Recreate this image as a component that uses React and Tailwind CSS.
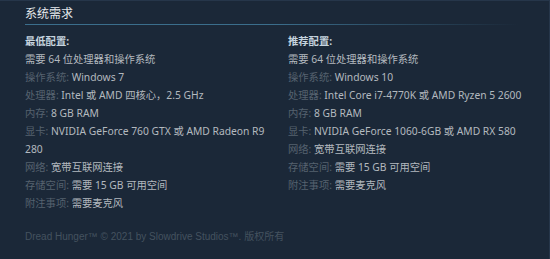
import React from "react";

const minimum = [
  { label: "操作系统:", value: "Windows 7" },
  { label: "处理器:", value: "Intel 或 AMD 四核心，2.5 GHz" },
  { label: "内存:", value: "8 GB RAM" },
  { label: "显卡:", value: "NVIDIA GeForce 760 GTX 或 AMD Radeon R9 280" },
  { label: "网络:", value: "宽带互联网连接" },
  { label: "存储空间:", value: "需要 15 GB 可用空间" },
  { label: "附注事项:", value: "需要麦克风" },
];

const recommended = [
  { label: "操作系统:", value: "Windows 10" },
  { label: "处理器:", value: "Intel Core i7-4770K 或 AMD Ryzen 5 2600" },
  { label: "内存:", value: "8 GB RAM" },
  { label: "显卡:", value: "NVIDIA GeForce 1060-6GB 或 AMD RX 580" },
  { label: "网络:", value: "宽带互联网连接" },
  { label: "存储空间:", value: "需要 15 GB 可用空间" },
  { label: "附注事项:", value: "需要麦克风" },
];

const SpecColumn = ({ title, items, className }) => (
  <div className={className}>
    <div className="font-bold text-[#c6d4df] leading-[18px]">{title}</div>
    <div className="text-[#b3b9bf] leading-[18px]">需要 64 位处理器和操作系统</div>
    {items.map((it) => (
      <div key={it.label} className="leading-[18px] text-[#b3b9bf]">
        <span className="text-[#56626f]">{it.label}</span> {it.value}
      </div>
    ))}
  </div>
);

export default function App() {
  return (
    <div
      className="w-[550px] h-[259px] bg-[#1b2838] border-t border-r border-[#26364a] overflow-hidden"
      style={{ fontFamily: '"Noto Sans", "Noto Sans CJK SC", sans-serif' }}
    >
      <div className="pl-[25px] pr-[6px] pt-[4px]">
        <h2 className="text-[12px] leading-[18px] text-[#e5e9ec] pb-[1px]">系统需求</h2>
        <div className="h-px mr-[24px] bg-gradient-to-r from-[#3b6e8c] via-[#3b6e8c] to-transparent" />
        <div className="flex text-[10.3px] pt-[7px]">
          <SpecColumn title="最低配置:" items={minimum} className="w-[263px] pr-[10px]" />
          <SpecColumn title="推荐配置:" items={recommended} className="flex-1" />
        </div>
        <div
          className="pt-[18px] text-[10px] text-[#44525f] leading-[14px]"
          style={{ fontFamily: '"Liberation Sans", "Noto Sans CJK SC", sans-serif' }}
        >
          Dread Hunger™ © 2021 by Slowdrive Studios™. 版权所有
        </div>
      </div>
    </div>
  );
}
